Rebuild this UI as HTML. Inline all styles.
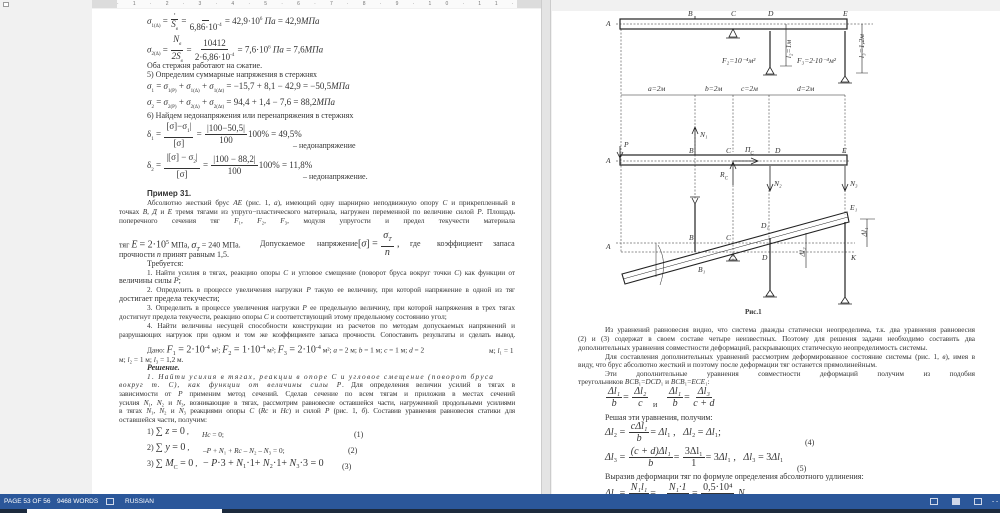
<!DOCTYPE html>
<html><head><meta charset="utf-8"><style>
*{margin:0;padding:0;box-sizing:border-box}
body{width:1000px;height:513px;overflow:hidden;background:#f1f1f1;position:relative;font-family:"Liberation Serif","Noto Serif CJK SC",serif;color:#333;font-size:8px}
.pg{position:absolute;background:#fff}
.t{position:absolute;white-space:nowrap;line-height:9px;font-size:8px}
.j{text-align:justify;text-align-last:justify;font-size:7.3px;letter-spacing:-0.05px}
.fr{display:inline-flex;flex-direction:column;align-items:center;vertical-align:middle;margin:0 1px}
.fr span:first-child{border-bottom:0.8px solid #333;padding:0 2px}
.i{font-style:italic}
.s{position:absolute;color:#fff;font-family:"Liberation Sans",sans-serif;font-size:6.5px;top:498px}
.f{position:absolute;font-style:italic;font-size:7.5px;white-space:nowrap;line-height:8px}
</style></head><body>
<div style="position:absolute;left:92px;top:0;width:449px;height:8px;background:#dcdcdc"></div>
<div style="position:absolute;left:117px;top:0;width:400px;height:8px;background:#fafafa;font-family:'Liberation Sans',sans-serif;font-size:5px;color:#777;letter-spacing:14.2px;line-height:8px;white-space:nowrap;overflow:hidden">·1·2·3·4·5·6·7·8·9·10·11·12·13·14·15·16·17·18·</div>
<div style="position:absolute;left:3px;top:2px;width:6px;height:5px;border:1px solid #999;background:#fff"></div>
<div class="pg" style="left:92px;top:9px;width:449px;height:485px"></div>
<div style="position:absolute;left:541px;top:0;width:10px;height:494px;background:#e4e4e4;border-left:1px solid #ccc;border-right:1px solid #ccc"></div>
<div class="pg" style="left:552px;top:11px;width:448px;height:483px"></div>

<div class="t" style="left:147px;top:10px;font-size:9px"><span class="i">σ</span><sub style="font-size:5px">1(Δ)</sub> = <span class="fr"><span>·</span><span class="i">S<sub style="font-size:5px">в</sub></span></span> = <span class="fr"><span>&nbsp;</span><span>6,86·10<sup style="font-size:5px">-4</sup></span></span> = 42,9·10<sup style="font-size:5px">6</sup> <span class="i">Па</span> = 42,9<span class="i">МПа</span></div>
<div class="t" style="left:147px;top:34px;font-size:9px;line-height:11px"><span class="i">σ</span><sub style="font-size:5px">2(Δ)</sub> = <span class="fr"><span class="i">N<sub style="font-size:5px">в</sub></span><span class="i">2S<sub style="font-size:5px">в</sub></span></span> = <span class="fr"><span>10412</span><span>2·6,86·10<sup style="font-size:5px">-4</sup></span></span> = 7,6·10<sup style="font-size:5px">6</sup> <span class="i">Па</span> = 7,6<span class="i">МПа</span></div>
<div class="t" style="left:147px;top:61px">Оба стержня работают на сжатие.</div>
<div class="t" style="left:147px;top:70px">5) Определим суммарные напряжения в стержнях</div>
<div class="t" style="left:147px;top:82px;font-size:9px"><span class="i">σ</span><sub style="font-size:5px">1</sub> = <span class="i">σ</span><sub style="font-size:5px">1(P)</sub> + <span class="i">σ</span><sub style="font-size:5px">1(Δ)</sub> + <span class="i">σ</span><sub style="font-size:5px">1(Δt)</sub> = −15,7 + 8,1 − 42,9 = −50,5<span class="i">МПа</span></div>
<div class="t" style="left:147px;top:98px;font-size:9px"><span class="i">σ</span><sub style="font-size:5px">2</sub> = <span class="i">σ</span><sub style="font-size:5px">2(P)</sub> + <span class="i">σ</span><sub style="font-size:5px">2(Δ)</sub> + <span class="i">σ</span><sub style="font-size:5px">2(Δt)</sub> = 94,4 + 1,4 − 7,6 = 88,2<span class="i">МПа</span></div>
<div class="t" style="left:147px;top:111px">6) Найдем недонапряжения или перенапряжения в стержнях</div>
<div class="t" style="left:147px;top:121px;font-size:9px;line-height:11px">δ<sub style="font-size:5px">1</sub> = <span class="fr"><span>[σ]−σ<sub style="font-size:5px">1</sub>|</span><span>[σ]</span></span> = <span class="fr"><span>|100−50,5|</span><span>100</span></span>100% = 49,5%</div>
<div class="t" style="left:293px;top:141px">– недонапряжение</div>
<div class="t" style="left:147px;top:152px;font-size:9px;line-height:11px">δ<sub style="font-size:5px">2</sub> = <span class="fr"><span>|[σ] − σ<sub style="font-size:5px">2</sub>|</span><span>[σ]</span></span> = <span class="fr"><span>|100 − 88,2|</span><span>100</span></span>100% = 11,8%</div>
<div class="t" style="left:303px;top:172px">– недонапряжение.</div>

<div class="t" style="left:147px;top:189px;font-family:'Liberation Sans',sans-serif;font-weight:bold">Пример 31.</div>
<div class="t j" style="left:147px;top:198px;width:368px">Абсолютно жесткий брус <i>AE</i> (рис. 1, <i>а</i>), имеющий одну шарнирно неподвижную опору <i>C</i> и прикрепленный в</div>
<div class="t j" style="left:119px;top:207px;width:396px">точках <i>B, Д</i> и <i>E</i> тремя тягами из упруго−пластического материала, нагружен переменной по величине силой <i>P</i>. Площадь</div>
<div class="t j" style="left:119px;top:216px;width:396px">поперечного сечения тяг <i>F</i>₁, <i>F</i>₂, <i>F</i>₃, модуля упругости и предел текучести материала</div>
<div class="t" style="left:119px;top:239px">тяг <span style="font-size:10px" class="i">E</span> <span style="font-size:10px">= 2·10</span><sup style="font-size:6px">5</sup> МПа, <span class="i" style="font-size:10px">σ<sub style="font-size:6px">T</sub></span> = 240 МПа.</div>
<div class="t" style="left:260px;top:239px">Допускаемое</div>
<div class="t" style="left:317px;top:239px">напряжение</div>
<div class="t" style="left:358px;top:230px;font-size:10px;line-height:11px">[<i>σ</i>] = <span class="fr"><span class="i">σ<sub style="font-size:6px">T</sub></span><span class="i">n</span></span> ,</div>
<div class="t" style="left:410px;top:239px">где</div>
<div class="t" style="left:437px;top:239px">коэффициент</div>
<div class="t" style="left:493px;top:239px">запаса</div>
<div class="t" style="left:119px;top:250px">прочности <i>n</i> принят равным 1,5.</div>
<div class="t" style="left:147px;top:259px">Требуется:</div>
<div class="t j" style="left:147px;top:268px;width:368px">1. Найти усилия в тягах, реакцию опоры <i>C</i> и угловое смещение (поворот бруса вокруг точки <i>C</i>) как функции от</div>
<div class="t" style="left:119px;top:276px">величины силы <i>P</i>;</div>
<div class="t j" style="left:147px;top:285px;width:368px">2. Определить в процессе увеличения нагрузки <i>P</i> такую ее величину, при которой напряжение в одной из тяг</div>
<div class="t" style="left:119px;top:294px">достигает предела текучести;</div>
<div class="t j" style="left:147px;top:303px;width:368px">3. Определить в процессе увеличения нагрузки <i>P</i> ее предельную величину, при которой напряжения в трех тягах</div>
<div class="t" style="left:119px;top:312px;font-size:7.3px">достигнут предела текучести, реакцию опоры <i>C</i> и соответствующий этому предельному состоянию угол;</div>
<div class="t j" style="left:147px;top:321px;width:368px">4. Найти величины несущей способности конструкции из расчетов по методам допускаемых напряжений и</div>
<div class="t j" style="left:119px;top:330px;width:396px;letter-spacing:-0.2px">разрушающих нагрузок при одном и том же коэффициенте запаса прочности. Сопоставить результаты и сделать вывод.</div>
<div class="t" style="left:147px;top:344px;font-size:7.3px">Дано: <span class="i" style="font-size:10px">F</span><sub style="font-size:6px">1</sub><span style="font-size:10px"> = 2·10</span><sup style="font-size:6px">-4</sup> м²; <span class="i" style="font-size:10px">F</span><sub style="font-size:6px">2</sub><span style="font-size:10px"> = 1·10</span><sup style="font-size:6px">-4</sup> м²; <span class="i" style="font-size:10px">F</span><sub style="font-size:6px">3</sub><span style="font-size:10px"> = 2·10</span><sup style="font-size:6px">-4</sup> м²; <i>a</i> = 2 м; <i>b</i> = 1 м; <i>c</i> = 1 м; <i>d</i> = 2</div>
<div class="t" style="left:489px;top:346px;font-size:7.3px">м; <i>l</i>₁ = 1</div>
<div class="t" style="left:119px;top:355px;font-size:7.3px">м; <i>l</i>₂ = 1 м; <i>l</i>₃ = 1,2 м.</div>
<div class="t" style="left:147px;top:363px;font-weight:bold;font-style:italic">Решение.</div>
<div class="t j" style="left:147px;top:372px;width:368px;font-style:italic;letter-spacing:1.3px;text-align-last:left">1. Найти усилия в тягах, реакции в опоре C и угловое смещение (поворот бруса</div>
<div class="t j" style="left:119px;top:380px;width:396px"><i style="letter-spacing:0.8px">вокруг т. C), как функции от величины силы P</i>. Для определения величин усилий в тягах в</div>
<div class="t j" style="left:119px;top:389px;width:396px">зависимости от <i>P</i> применим метод сечений. Сделав сечение по всем тягам и приложив в местах сечений</div>
<div class="t j" style="left:119px;top:398px;width:396px;letter-spacing:-0.25px">усилия <i>N</i>₁, <i>N</i>₂ и <i>N</i>₃, возникающие в тягах, рассмотрим равновесие оставшейся части, нагруженной продольными усилиями</div>
<div class="t j" style="left:119px;top:406px;width:396px;letter-spacing:-0.2px">в тягах <i>N</i>₁, <i>N</i>₂ и <i>N</i>₃ реакциями опоры <i>C</i> (<i>Rc</i> и <i>Hc</i>) и силой <i>P</i> (рис. 1, <i>б</i>). Составив уравнения равновесия статики для</div>
<div class="t" style="left:119px;top:415px;font-size:7.3px">оставшейся части, получим:</div>
<div class="t" style="left:147px;top:427px">1) <span style="font-size:10px">∑ <i>z</i> = 0</span> ,</div>
<div class="t" style="left:202px;top:430px;font-size:7.3px"><i>Hc</i> = 0;</div>
<div class="t" style="left:354px;top:430px">(1)</div>
<div class="t" style="left:147px;top:443px">2) <span style="font-size:10px">∑ <i>y</i> = 0</span> ,</div>
<div class="t" style="left:203px;top:446px;font-size:7.3px">–<i>P</i> + <i>N</i>₁ + <i>Rc</i> – <i>N</i>₂ – <i>N</i>₃ = 0;</div>
<div class="t" style="left:348px;top:446px">(2)</div>
<div class="t" style="left:147px;top:459px">3) <span style="font-size:10px">∑ <i>M</i><sub style="font-size:6px">C</sub> = 0</span> ,</div>
<div class="t" style="left:203px;top:459px;font-size:10px">− <i>P</i>·3 + <i>N</i>₁·1+ <i>N</i>₂·1+ <i>N</i>₃·3 = 0</div>
<div class="t" style="left:342px;top:462px">(3)</div>

<svg style="position:absolute;left:0;top:0" width="1000" height="513" viewBox="0 0 1000 513" fill="none" stroke="#222" stroke-width="0.8">
<g stroke-dasharray="2,1.5" stroke-width="0.5">
<line x1="616" y1="24" x2="873" y2="24"/>
<line x1="621" y1="29" x2="621" y2="252"/>
<line x1="695" y1="95" x2="695" y2="200"/>
<line x1="733" y1="95" x2="733" y2="152"/>
<line x1="733" y1="185" x2="733" y2="260"/>
<line x1="769" y1="95" x2="769" y2="155"/>
<line x1="769" y1="190" x2="769" y2="240"/>
<line x1="845" y1="95" x2="845" y2="155"/>
<line x1="845" y1="190" x2="845" y2="215"/>
<line x1="616" y1="161" x2="850" y2="161"/>
<line x1="616" y1="243" x2="855" y2="243"/>
<line x1="621" y1="252" x2="855" y2="252"/>
</g>
<rect x="620" y="19" width="227" height="10" stroke-width="1.2"/>
<rect x="620" y="155" width="227" height="10" stroke-width="1.2"/>
<path d="M622 274 L847 212 L849 222 L625 284 Z" stroke-width="1.1"/>
<path d="M623 279 L848 217" stroke-width="0.5"/>
<path d="M733 29 L729 37 L737 37 Z M726 38 L740 38"/>
<line x1="770" y1="31" x2="770" y2="67" stroke-width="1.2"/>
<path d="M770 67 L766 74 L774 74 Z M763 75 L777 75"/>
<line x1="845" y1="31" x2="845" y2="76" stroke-width="1.2"/>
<path d="M845 76 L841 82 L849 82 Z M838 83 L852 83"/>
<line x1="695" y1="16" x2="695" y2="19"/>
<line x1="621" y1="95" x2="845" y2="95" stroke-width="0.6"/>
<path d="M786 24 L786 66 M862 24 L862 73 M780 66 L792 66 M856 73 L868 73" stroke-width="0.6"/>
<path d="M695 155 L695 128 M692 134 L695 127 L698 134" />
<path d="M620 146 L620 157 M617 152 L620 158 L623 152"/>
<path d="M733 161 L757 161 M751 158 L758 161 L751 164"/>
<path d="M733 185 L733 163 M730 169 L733 162 L736 169"/>
<path d="M770 166 L770 190 M767 184 L770 191 L773 184"/>
<path d="M845 166 L845 190 M842 184 L845 191 L848 184"/>
<path d="M690 197 L700 197 M692 198 L695 204 L698 198"/>
<line x1="695" y1="204" x2="695" y2="252" stroke-width="1.2"/>
<path d="M733 254 L729 260 L737 260 Z M726 261 L740 261"/>
<line x1="770" y1="238" x2="770" y2="290" stroke-width="1.2"/>
<path d="M770 290 L766 296 L774 296 Z M763 297 L777 297"/>
<line x1="845" y1="222" x2="845" y2="297" stroke-width="1.2"/>
<path d="M845 297 L841 303 L849 303 Z M838 304 L852 304"/>
<path d="M867 219 L867 247 M860 219 L875 219 M806 233 L806 268" stroke-width="0.6"/>
<path d="M658 245 Q668 262 660 285" stroke-width="0.5"/>
<path d="M656 243 L656 277" stroke-width="0.5"/>
</svg>
<div class="f" style="left:606px;top:20px">A</div>
<div class="f" style="left:688px;top:10px">B</div>
<div class="f" style="left:731px;top:10px">C</div>
<div class="f" style="left:768px;top:10px">D</div>
<div class="f" style="left:843px;top:10px">E</div>
<div class="f" style="left:722px;top:57px">F₂=10⁻⁴м²</div>
<div class="f" style="left:797px;top:57px">F₃=2·10⁻⁴м²</div>
<div class="f" style="left:780px;top:45px;transform:rotate(-90deg)">l₂=1м</div>
<div class="f" style="left:850px;top:42px;transform:rotate(-90deg)">l₃=1,2м</div>
<div class="f" style="left:648px;top:85px">a=2м</div>
<div class="f" style="left:705px;top:85px">b=2м</div>
<div class="f" style="left:741px;top:85px">c=2м</div>
<div class="f" style="left:797px;top:85px">d=2м</div>
<div class="f" style="left:700px;top:131px">N₁</div>
<div class="f" style="left:624px;top:141px">P</div>
<div class="f" style="left:689px;top:147px">B</div>
<div class="f" style="left:726px;top:147px">C</div>
<div class="f" style="left:745px;top:146px">П<sub style="font-size:5px">C</sub></div>
<div class="f" style="left:775px;top:147px">D</div>
<div class="f" style="left:842px;top:147px">E</div>
<div class="f" style="left:606px;top:157px">A</div>
<div class="f" style="left:720px;top:171px">R<sub style="font-size:5px">C</sub></div>
<div class="f" style="left:774px;top:180px">N₂</div>
<div class="f" style="left:850px;top:180px">N₃</div>
<div class="f" style="left:850px;top:204px">E₁</div>
<div class="f" style="left:761px;top:222px">D₁</div>
<div class="f" style="left:689px;top:234px">B</div>
<div class="f" style="left:726px;top:234px">C</div>
<div class="f" style="left:606px;top:243px">A</div>
<div class="f" style="left:762px;top:254px">D</div>
<div class="f" style="left:851px;top:254px">K</div>
<div class="f" style="left:698px;top:266px">B₁</div>
<div class="f" style="left:860px;top:228px;transform:rotate(-90deg)">Δl₁</div>
<div class="f" style="left:798px;top:248px;transform:rotate(-90deg)">Δl₂</div>
<div class="t" style="left:745px;top:308px;font-weight:bold;font-size:7px">Рис.1</div>

<div class="t j" style="left:605px;top:325px;width:370px">Из уравнений равновесия видно, что система дважды статически неопределима, т.к. два уравнения равновесия</div>
<div class="t j" style="left:578px;top:334px;width:397px">(2) и (3) содержат в своем составе четыре неизвестных. Поэтому для решения задачи необходимо составить два</div>
<div class="t" style="left:578px;top:343px;font-size:7.3px">дополнительных уравнения совместности деформаций, раскрывающих статическую неопределимость системы.</div>
<div class="t j" style="left:605px;top:352px;width:370px">Для составления дополнительных уравнений рассмотрим деформированное состояние системы (рис. 1, <i>в</i>), имея в</div>
<div class="t" style="left:578px;top:360px;font-size:7.3px">виду, что брус абсолютно жесткий и поэтому после деформации тяг останется прямолинейным.</div>
<div class="t j" style="left:605px;top:369px;width:370px">Эти дополнительные уравнения совместности деформаций получим из подобия</div>
<div class="t" style="left:578px;top:377px;font-size:7.3px">треугольников <i>BCB</i>₁=<i>DCD</i>₁ и <i>BCB</i>₁=<i>ECE</i>₁:</div>
<div class="t" style="left:605px;top:386px;font-size:10px;line-height:11px"><span class="fr"><span class="i">Δl₁</span><span class="i">b</span></span>= <span class="fr"><span class="i">Δl₂</span><span class="i">c</span></span></div>
<div class="t" style="left:653px;top:400px">и</div>
<div class="t" style="left:666px;top:386px;font-size:10px;line-height:11px"><span class="fr"><span class="i">Δl₁</span><span class="i">b</span></span>= <span class="fr"><span class="i">Δl₃</span><span class="i">c + d</span></span></div>
<div class="t" style="left:605px;top:413px">Решая эти уравнения, получим:</div>
<div class="t" style="left:605px;top:421px;font-size:10px;line-height:11px"><i>Δl</i>₂ = <span class="fr"><span class="i">cΔl₁</span><span class="i">b</span></span>= <i>Δl</i>₁ ,&nbsp;&nbsp; <i>Δl</i>₂ = <i>Δl</i>₁;</div>
<div class="t" style="left:805px;top:438px">(4)</div>
<div class="t" style="left:605px;top:446px;font-size:10px;line-height:11px"><i>Δl</i>₃ = <span class="fr"><span class="i">(c + d)Δl₁</span><span class="i">b</span></span>= <span class="fr"><span>3Δl₁</span><span>1</span></span>= 3<i>Δl</i>₁ ,&nbsp;&nbsp; <i>Δl</i>₃ = 3<i>Δl</i>₁</div>
<div class="t" style="left:797px;top:464px">(5)</div>
<div class="t" style="left:605px;top:472px">Выразив деформации тяг по формуле определения абсолютного удлинения:</div>
<div class="t" style="left:605px;top:482px;font-size:10px;line-height:11px"><i>Δl</i>₁ = <span class="fr"><span class="i">N₁l₁</span><span>&nbsp;</span></span>= &nbsp;&nbsp;&nbsp;<span class="fr"><span class="i">N₁·1</span><span>&nbsp;</span></span>&nbsp;= <span class="fr"><span>0,5·10⁴</span><span>&nbsp;</span></span> <i>N</i>₁</div>

<div style="position:absolute;left:0;top:494px;width:1000px;height:15px;background:#2b579a"></div>
<div style="position:absolute;left:0;top:509px;width:1000px;height:4px;background:#1c2a3d"></div>
<div style="position:absolute;left:27px;top:509px;width:195px;height:4px;background:#fff"></div>
<div class="s" style="left:4px">PAGE 53 OF 56</div>
<div class="s" style="left:57px">9468 WORDS</div>
<div class="s" style="left:106px;border:1px solid #cfd8ea;width:8px;height:7px;top:498px"></div>
<div class="s" style="left:125px">RUSSIAN</div>
<div class="s" style="left:930px;border:1px solid #cfd8ea;width:8px;height:7px"></div>
<div class="s" style="left:952px;background:#cfd8ea;width:8px;height:7px"></div>
<div class="s" style="left:974px;border:1px solid #cfd8ea;width:8px;height:7px"></div>
<div class="s" style="left:992px">- -</div>
</body></html>
